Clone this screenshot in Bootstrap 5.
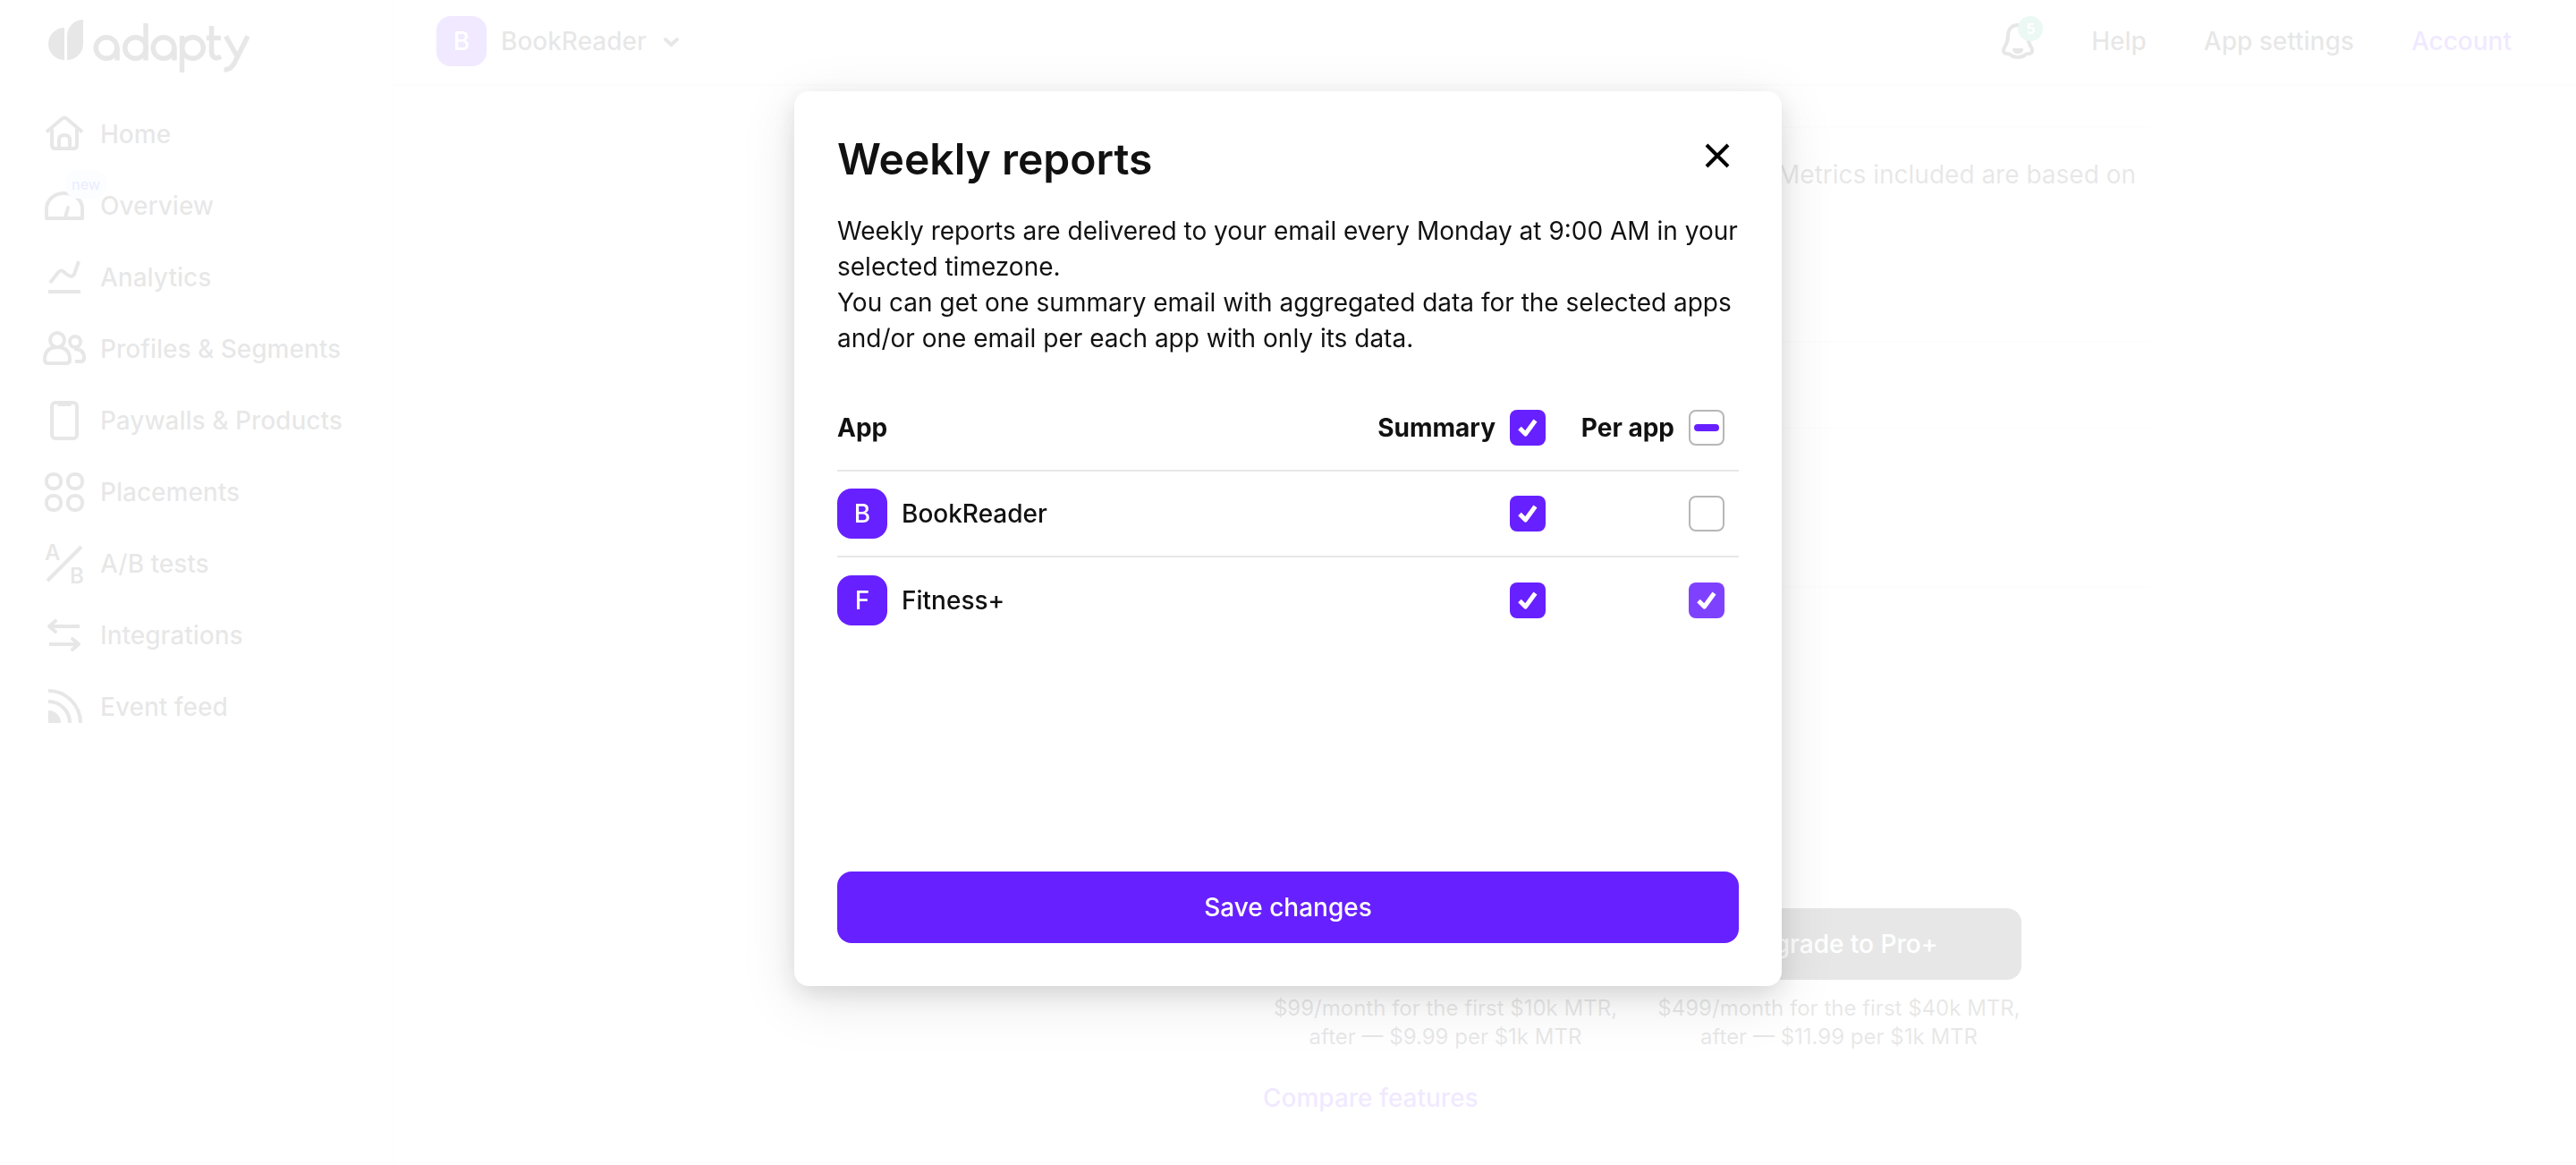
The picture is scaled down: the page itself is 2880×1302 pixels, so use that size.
<!DOCTYPE html>
<html lang="en">
<head>
<meta charset="utf-8">
<meta name="viewport" content="width=device-width, initial-scale=1">
<title>Weekly reports – Adapty</title>
<link rel="stylesheet" href="https://cdn.jsdelivr.net/npm/bootstrap@5.3.0/dist/css/bootstrap.min.css">
<style>
:root{--ink:#111;--brand:#6720ff;--line:#e7e7e7}
body{font-family:Inter,"Liberation Sans",sans-serif;font-size:28px;line-height:40px;color:var(--ink);background:#fff}
a{color:inherit;text-decoration:none}
.shell{min-height:100vh}
.side{width:440px;flex:none;border-right:2px solid #f4f4f4}
.brand-link{padding:20px 0 0 52px;height:110px}
.side-link{height:80px;padding-left:48px;gap:16px;font-weight:500;position:relative}
.side-link svg{width:48px;height:48px;flex:none;overflow:visible}
.pic{fill:none;stroke:currentColor;stroke-width:4}
.new-tag{position:absolute;left:72px;top:0;height:32px;padding:0 8px;border-radius:16px;background:#dbe9ff;color:#2f4dff;font-size:16px;line-height:32px}
.topbar{padding:18px 72px 20px 48px;border-bottom:2px solid var(--line);font-weight:500}
.top-links{gap:64px}
.app-tile{width:56px;height:56px;border-radius:16px;background:var(--brand);color:#fff;font-weight:500;flex:none}
.brand-text{color:var(--brand)}
.bell{width:36px;height:40px}
.count-tag{position:absolute;left:18px;top:-8px;width:28px;height:28px;border-radius:14px;background:#35b48a;color:#fff;font-size:16px;line-height:28px;font-weight:600}
.plans{width:1488px;margin:45px auto 0}
.plan-row{border-top:2px solid var(--line)}
.plan-note{height:240px;padding:32px 16px 0 0}
.plan-gap-a{height:96px}
.plan-gap-b{height:178px}
.plan-foot{padding:358px 144px 0 0;gap:32px}
.plan-col{width:408px;font-size:24px;line-height:32px}
.plan-btn{height:80px;border:0;border-radius:16px;background:var(--ink);color:#fff;font-size:28px;font-weight:500}
.compare{padding:32px 0 0 496px;font-weight:500}
.veil{background:#fff;--bs-backdrop-opacity:.9}
.report-dialog{max-width:1104px;margin:102px auto}
.report-box{min-height:1000px;padding:48px;border:0;border-radius:16px;background:#fff;color:var(--ink);box-shadow:0 16px 64px rgba(0,0,0,.1),0 8px 24px rgba(0,0,0,.1)}
.report-title{font-size:48px;line-height:56px;font-weight:600}
.x-btn{width:48px;height:48px;border:0;padding:0;background:none}
.report-text{margin:32px 0}
.report-table{margin:0;width:100%}
.report-table th,.report-table td{height:96px;padding:0;vertical-align:middle;text-align:left}
.report-table thead th,.report-table tbody tr:not(:last-child)>td{border-bottom:2px solid var(--line)}
.report-table .pick{text-align:right;width:200px;padding-right:16px}
.report-table .pick.first{width:400px}
.report-table .pick label{gap:16px}
.tick{appearance:none;display:block;width:40px;height:40px;margin:0;border:2px solid #b7b7b7;border-radius:8px;background:#fff center/40px 40px no-repeat;background-origin:border-box}
.tick:checked{border:0;background-color:var(--brand);background-image:url("data:image/svg+xml,%3Csvg xmlns='http://www.w3.org/2000/svg' viewBox='0 0 40 40'%3E%3Cpath d='M11 20.500l6.500 6.500L28.500 12' fill='none' stroke='%23fff' stroke-width='5' stroke-linejoin='round'/%3E%3C/svg%3E")}
.tick.hovered{background-color:#7e42ff}
.tick:indeterminate{background-image:url("data:image/svg+xml,%3Csvg xmlns='http://www.w3.org/2000/svg' viewBox='0 0 40 40'%3E%3Crect x='6' y='16' width='28' height='8' rx='4' fill='%236720ff'/%3E%3C/svg%3E")}
.save-btn{height:80px;border:0;border-radius:16px;background:var(--brand);color:#fff;font-size:28px;font-weight:500}
</style>
<script src="https://cdn.jsdelivr.net/npm/bootstrap@5.3.0/dist/js/bootstrap.bundle.min.js"></script>
</head>
<body>
<div class="shell d-flex">
  <aside class="side">
    <a class="brand-link d-block" href="#" aria-label="Adapty">
      <svg width="230" height="64" viewBox="52 20 230 64" fill="none" stroke="currentColor" stroke-width="5.500">
        <path d="M72 31v36a18 18 0 0 1 0-36zM75 67V40a18 18 0 0 1 18-18v27a18 18 0 0 1-18 18z" fill="currentColor" stroke="none"/>
        <circle cx="119" cy="53.500" r="11.800"/><path d="M131 53v14.500M163 26v41.500"/>
        <circle cx="151.500" cy="53.500" r="11.800"/>
        <circle cx="183" cy="53.500" r="11.800"/><path d="M195 53v14.500M203.500 40v41"/>
        <circle cx="215.500" cy="53.500" r="11.800"/>
        <path d="M236.500 29v29c0 6 5 9 10.500 5M231 42.500h16M252.500 40.500l13.500 24M277 40.500l-15 30c-2.500 5-6 7.500-11.500 7.500"/>
      </svg>
    </a>
    <nav>
      <a class="side-link d-flex align-items-center" href="#"><svg class="pic" viewBox="0 0 48 48"><path d="M4 21.500L21.500 6.500q2.500-2 5 0L44 21.500M10 18v18q0 4 4 4h20q4 0 4-4V18M18 40V30q0-5 6-5t6 5v10"/></svg>Home</a>
      <a class="side-link d-flex align-items-center" href="#"><svg class="pic" viewBox="0 0 48 48"><path d="M4 38V28C4 17 13 10 24 10s20 7 20 18v10z" stroke-linejoin="round"/><path d="M25 37l3-11" stroke-linecap="round"/></svg>Overview<span class="new-tag">new</span></a>
      <a class="side-link d-flex align-items-center" href="#"><svg class="pic" viewBox="0 0 48 48"><path d="M6 40h36M8 30L17 18.500q3.500-4 7 0l4 3q4 3 7-1L40 6"/></svg>Analytics</a>
      <a class="side-link d-flex align-items-center" href="#"><svg class="pic" viewBox="0 0 48 48"><circle cx="16" cy="14" r="8"/><path d="M2 36q0-14 14-14t14 14q0 4-4 4H6q-4 0-4-4z"/><circle cx="36" cy="16" r="6"/><path d="M35 24q11 0 11 10 0 4-4 4h-6"/></svg>Profiles &amp; Segments</a>
      <a class="side-link d-flex align-items-center" href="#"><svg class="pic" viewBox="0 0 48 48"><rect x="10" y="4" width="28" height="40" rx="4"/><path d="M18 6h12" stroke-linecap="round"/></svg>Paywalls &amp; Products</a>
      <a class="side-link d-flex align-items-center" href="#"><svg class="pic" viewBox="0 0 48 48"><rect x="4" y="4" width="16" height="16" rx="7"/><rect x="28" y="4" width="16" height="16" rx="7"/><rect x="4" y="28" width="16" height="16" rx="7"/><rect x="28" y="28" width="16" height="16" rx="7"/></svg>Placements</a>
      <a class="side-link d-flex align-items-center" href="#"><svg class="pic" viewBox="0 0 48 48"><path d="M5 43L43 5"/><g fill="currentColor" stroke="none" font-size="24" font-weight="600"><text x="2" y="20">A</text><text x="30" y="46">B</text></g></svg>A/B tests</a>
      <a class="side-link d-flex align-items-center" href="#"><svg class="pic" viewBox="0 0 48 48"><path d="M41 14H8M7 34h33"/><path d="M14 8l-7 6 7 6M33 28l7 6-7 6" stroke-linecap="round" stroke-linejoin="round"/></svg>Integrations</a>
      <a class="side-link d-flex align-items-center" href="#"><svg class="pic" viewBox="0 0 48 48"><path d="M6 6a36 36 0 0 1 36 36M6 18a24 24 0 0 1 24 24"/><path d="M6 28a14 14 0 0 1 14 14H6z" fill="currentColor" stroke="none"/></svg>Event feed</a>
    </nav>
  </aside>
  <div class="flex-grow-1">
    <header class="topbar d-flex align-items-center justify-content-between">
      <a class="d-flex align-items-center gap-3" href="#">
        <span class="app-tile d-flex align-items-center justify-content-center">B</span>BookReader
        <svg class="pic" width="24" height="24" viewBox="0 0 24 24"><path d="M5 10l6.500 6 6.500-6" stroke-linecap="round"/></svg>
      </a>
      <nav class="top-links d-flex align-items-center">
        <a class="position-relative d-flex" href="#" aria-label="Notifications"><svg class="bell" viewBox="0 0 36 40"><path d="M18 2C11 2 7 7 7 14c0 6-1 8-3.500 12-3 5-1 8 2 8 3 0 3 0 4 1 4 4 13 4 17 0 1-1 1-1 4-1 3 0 5-3 2-8C30 22 29 20 29 14 29 7 25 2 18 2z" fill="none" stroke="currentColor" stroke-width="4"/><path d="M12 28h12q0 6-6 6t-6-6z" fill="currentColor"/></svg><span class="count-tag text-center">5</span></a>
        <a href="#">Help</a>
        <a href="#">App settings</a>
        <a class="brand-text" href="#">Account</a>
      </nav>
    </header>
    <main class="plans">
      <div class="plan-row plan-note text-end">Metrics included are based on</div>
      <div class="plan-row plan-gap-a"></div>
      <div class="plan-row plan-gap-b"></div>
      <div class="plan-row plan-foot d-flex justify-content-end align-items-end text-center">
        <div class="plan-col">$99/month for the first $10k MTR, after — $9.99 per $1k MTR</div>
        <div class="plan-col d-flex flex-column gap-3"><button class="plan-btn" type="button">Upgrade to Pro+</button><span>$499/month for the first $40k MTR, after — $11.99 per $1k MTR</span></div>
      </div>
      <div class="compare"><a class="brand-text" href="#">Compare features</a></div>
    </main>
  </div>
</div>

<div class="modal-backdrop veil show"></div>
<div class="modal show d-block" tabindex="-1" role="dialog" aria-modal="true" aria-labelledby="reportTitle">
  <div class="modal-dialog report-dialog">
    <form class="modal-content report-box">
      <div class="d-flex justify-content-between align-items-start">
        <h1 class="report-title mb-0" id="reportTitle">Weekly reports</h1>
        <button class="x-btn" type="button" aria-label="Close"><svg class="pic d-block" width="48" height="48" viewBox="0 0 48 48"><path d="M12 12l24 24M36 12L12 36"/></svg></button>
      </div>
      <p class="report-text">Weekly reports are delivered to your email every Monday at 9:00 AM in your selected timezone.<br>You can get one summary email with aggregated data for the selected apps and/or one email per each app with only its data.</p>
      <table class="report-table">
        <thead>
          <tr><th>App</th>
            <th class="pick first"><label class="d-flex align-items-center justify-content-end">Summary<input class="tick" type="checkbox" checked></label></th>
            <th class="pick"><label class="d-flex align-items-center justify-content-end">Per app<input class="tick" type="checkbox" id="allPerApp"></label></th></tr>
        </thead>
        <tbody>
          <tr><td><div class="d-flex align-items-center gap-3 fw-medium"><span class="app-tile d-flex align-items-center justify-content-center">B</span>BookReader</div></td>
            <td class="pick first"><input class="tick ms-auto" type="checkbox" checked aria-label="BookReader summary"></td>
            <td class="pick"><input class="tick ms-auto" type="checkbox" aria-label="BookReader per app"></td></tr>
          <tr><td><div class="d-flex align-items-center gap-3 fw-medium"><span class="app-tile d-flex align-items-center justify-content-center">F</span>Fitness+</div></td>
            <td class="pick first"><input class="tick ms-auto" type="checkbox" checked aria-label="Fitness+ summary"></td>
            <td class="pick"><input class="tick hovered ms-auto" type="checkbox" checked aria-label="Fitness+ per app"></td></tr>
        </tbody>
      </table>
      <button class="save-btn w-100 mt-auto" type="submit">Save changes</button>
    </form>
  </div>
</div>
<script>document.getElementById('allPerApp').indeterminate = true;</script>
</body>
</html>
